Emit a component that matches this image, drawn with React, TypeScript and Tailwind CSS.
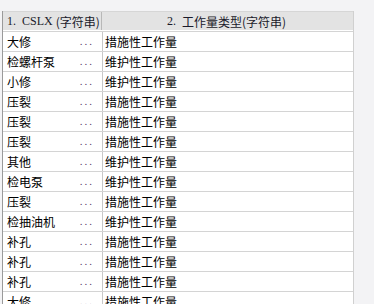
import React from "react";

const rows: [string, string][] = [
  ["大修", "措施性工作量"],
  ["检螺杆泵", "维护性工作量"],
  ["小修", "维护性工作量"],
  ["压裂", "措施性工作量"],
  ["压裂", "措施性工作量"],
  ["压裂", "措施性工作量"],
  ["其他", "维护性工作量"],
  ["检电泵", "维护性工作量"],
  ["压裂", "措施性工作量"],
  ["检抽油机", "维护性工作量"],
  ["补孔", "措施性工作量"],
  ["补孔", "措施性工作量"],
  ["补孔", "措施性工作量"],
  ["大修", "措施性工作量"],
];

const cjk = { fontFamily: '"Noto Sans CJK SC", sans-serif' };
const serif = { fontFamily: '"Liberation Serif", "Noto Sans CJK SC", serif' };

export default function App() {
  return (
    <div className="w-[374px] h-[304px] overflow-hidden bg-[#f3f3f5] pt-[11px]">
      <div className="ml-[2px] w-[352px] border-l border-l-[#9a9a9a] border-r border-r-[#d0d0d0] bg-white">
        <div className="flex h-[20px] border-t border-t-[#d6d6d6] bg-[#e3e3e3] text-[12px] leading-[19px] text-[#1a1a2a] border-b border-b-white whitespace-nowrap">
          <div className="w-[99px] flex items-center pl-[4px] border-r border-r-[#b8b8b8]">
            <span style={serif} className="whitespace-pre">1.  CSLX</span>
            <span style={cjk} className="ml-[3px]">(字符串)</span>
          </div>
          <div className="flex-1 flex items-center justify-center pr-[2px]">
            <span style={serif} className="whitespace-pre">2.  </span>
            <span style={cjk}>工作量类型(字符串)</span>
          </div>
        </div>
        {rows.map(([a, b], i) => (
          <div
            key={i}
            className="flex h-[20px] border-t border-t-[#d4d4d4] text-[12px] leading-[19px] text-black whitespace-nowrap"
            style={cjk}
          >
            <div className="w-[100px] flex items-center justify-between pl-[4px] pr-[8px] border-r border-r-[#c8c8c8]">
              <span>{a}</span>
              <span className="text-[#5a3a6a] tracking-[2px] text-[11px]" style={serif}>...</span>
            </div>
            <div className="flex-1 flex items-center pl-[2px]">{b}</div>
          </div>
        ))}
      </div>
    </div>
  );
}
